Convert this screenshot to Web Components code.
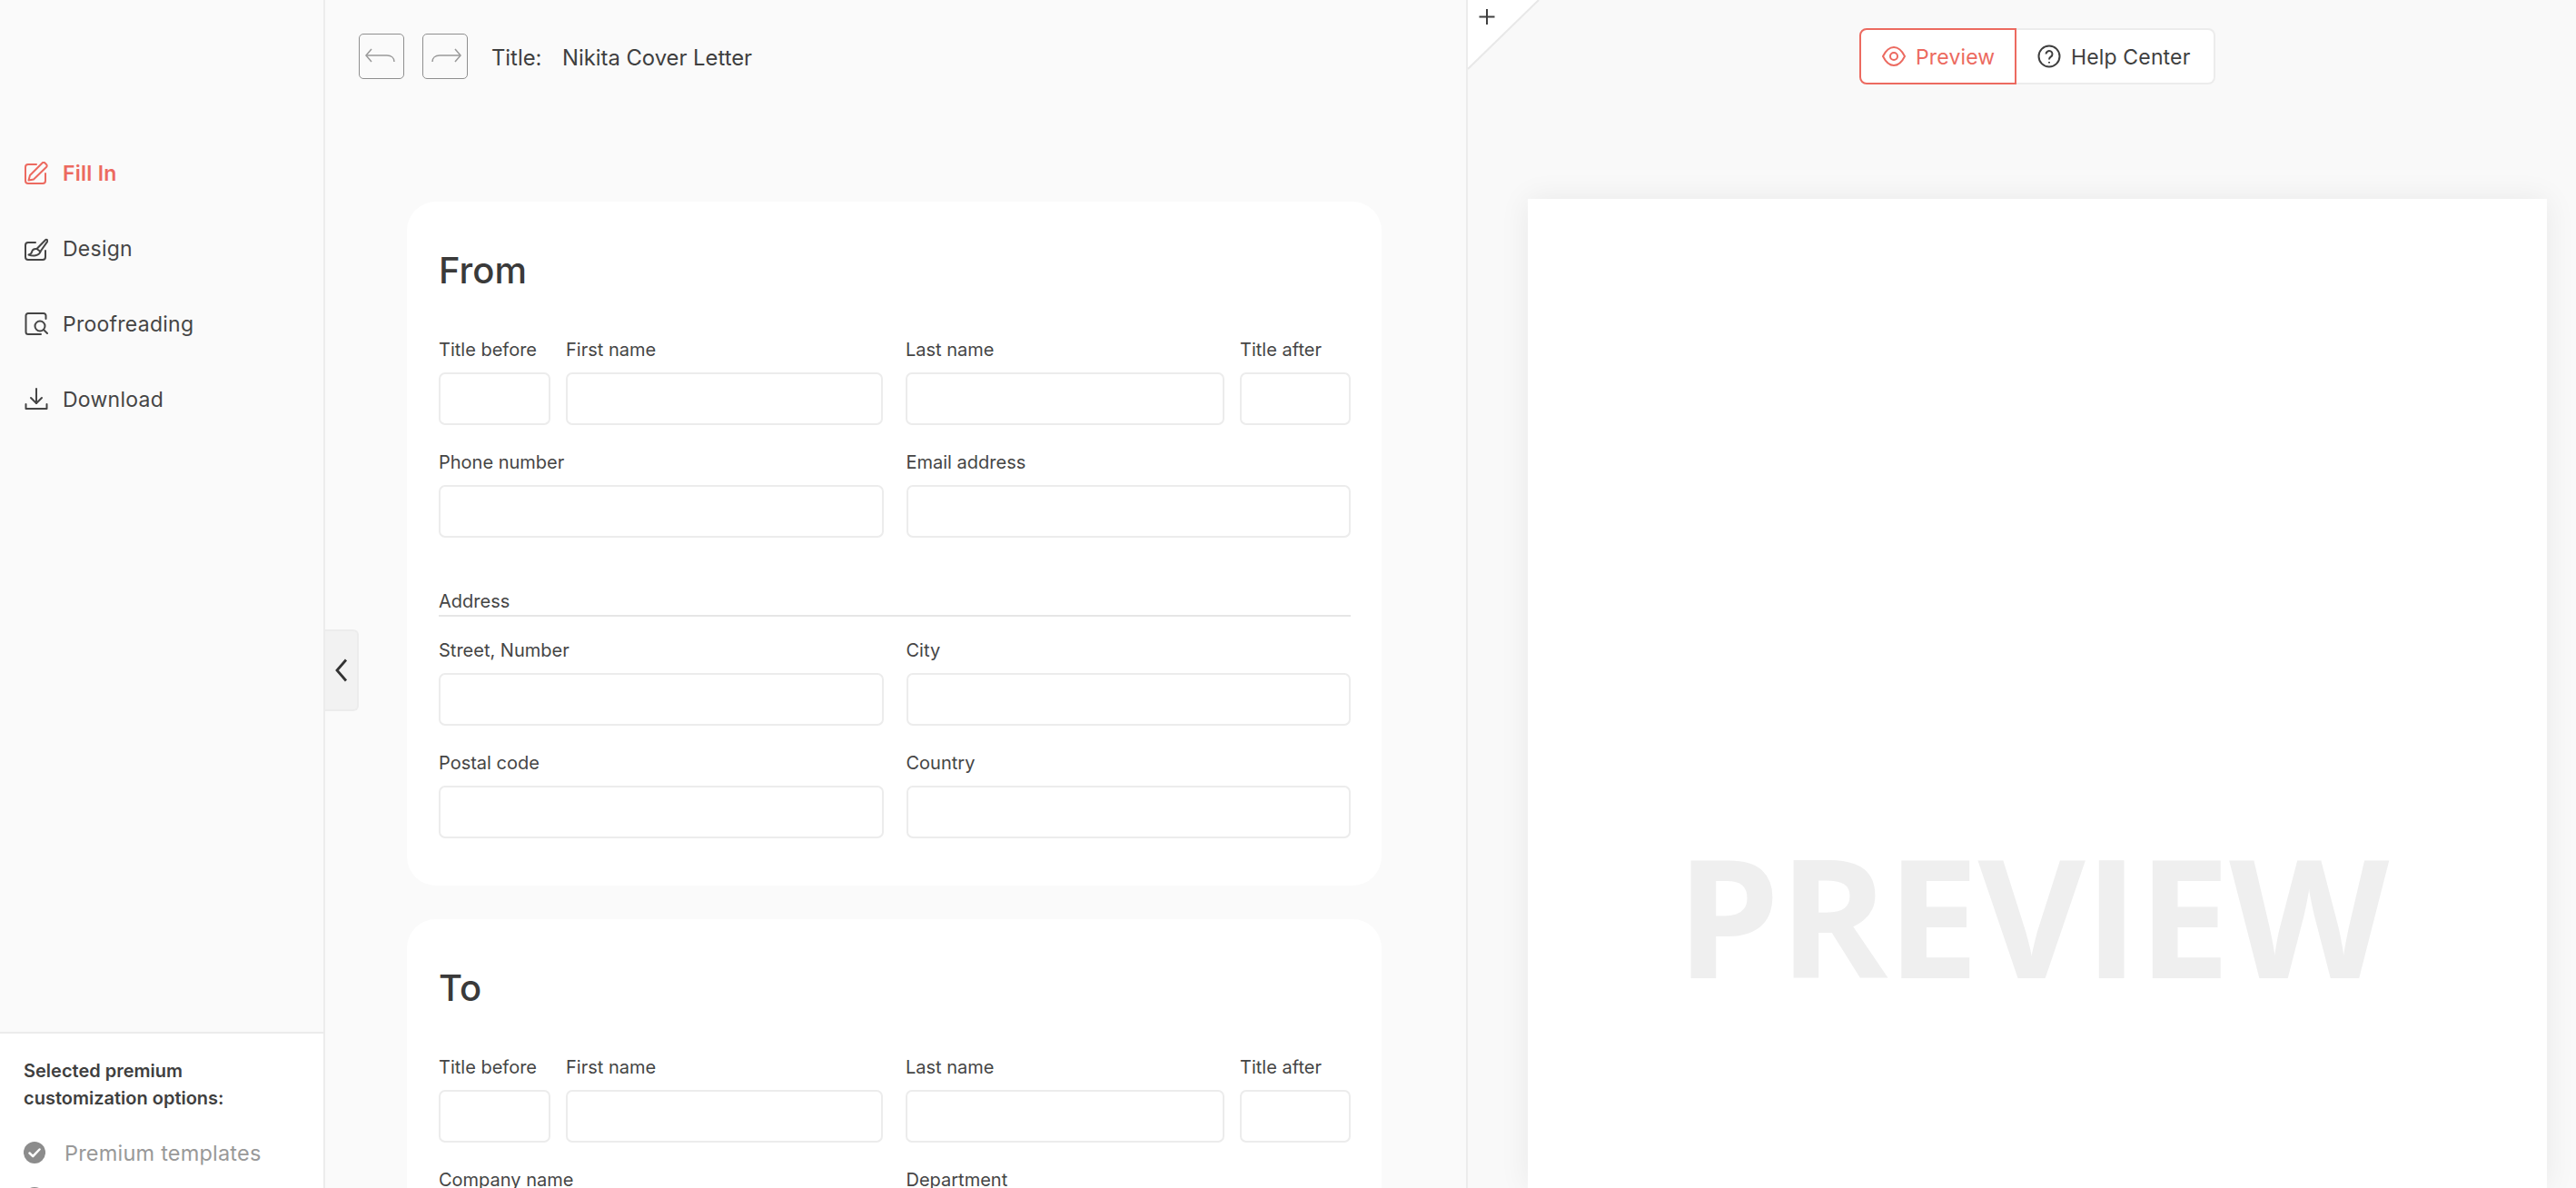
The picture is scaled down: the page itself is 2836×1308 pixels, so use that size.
<!DOCTYPE html>
<html lang="en">
<head>
<meta charset="utf-8">
<title>Cover Letter</title>
<style>
  html, body { margin: 0; height: 100%; overflow: hidden; }
  body { font-family: Inter, "Liberation Sans", sans-serif; color: #3f3f3f; background: #fafafa; }
  .app { display: grid; grid-template-columns: 358px 1258px 1fr; height: 1308px; overflow: hidden; }
</style>
</head>
<body>

<div class="app">
  <side-nav>
    <nav-item active label="Fill In" icon="fill"></nav-item>
    <nav-item label="Design" icon="design"></nav-item>
    <nav-item label="Proofreading" icon="proof"></nav-item>
    <nav-item label="Download" icon="download"></nav-item>
    <premium-box slot="bottom">
      <premium-option label="Premium templates"></premium-option>
      <premium-option label=""></premium-option>
    </premium-box>
  </side-nav>

  <editor-panel title-text="Nikita Cover Letter">
    <form-card heading="From">
      <field-row kind="name">
        <form-field label="Title before"></form-field>
        <form-field label="First name"></form-field>
        <form-field label="Last name"></form-field>
        <form-field label="Title after"></form-field>
      </field-row>
      <field-row>
        <form-field label="Phone number"></form-field>
        <form-field label="Email address"></form-field>
      </field-row>
      <section-rule label="Address"></section-rule>
      <field-row>
        <form-field label="Street, Number"></form-field>
        <form-field label="City"></form-field>
      </field-row>
      <field-row>
        <form-field label="Postal code"></form-field>
        <form-field label="Country"></form-field>
      </field-row>
    </form-card>
    <form-card heading="To">
      <field-row kind="name">
        <form-field label="Title before"></form-field>
        <form-field label="First name"></form-field>
        <form-field label="Last name"></form-field>
        <form-field label="Title after"></form-field>
      </field-row>
      <field-row>
        <form-field label="Company name"></form-field>
        <form-field label="Department"></form-field>
      </field-row>
    </form-card>
  </editor-panel>

  <preview-panel></preview-panel>
</div>

<script>
  const ICONS = {
    fill: '<path d="M13 3H4a3 3 0 0 0-3 3v15a3 3 0 0 0 3 3h16a3 3 0 0 0 3-3v-8"/><path d="M4.500 20.500L6 15 19.500 1.500a2 2 0 0 1 3 0l1.500 1.500a2 2 0 0 1 0 3L10 19.500z"/>',
    design: '<path d="M12 6H4a3 3 0 0 0-3 3v13a3 3 0 0 0 3 3h16a3 3 0 0 0 3-3v-7"/><path d="M13.500 13L23 3.200a1.400 1.400 0 0 1 2 2L17 16.500"/><path d="M13.500 13c-3-.3-5 1.200-5.500 3.500-.3 1.500-1.500 2.500-3.500 3 4.500 1.500 11.500 1.500 13-3.500z"/>',
    proof: '<path d="M23.500 7V3.500A2.500 2.500 0 0 0 21 1H4a2.500 2.500 0 0 0-2.500 2.500v18A2.500 2.500 0 0 0 4 24h14"/><circle cx="17" cy="15" r="5.500"/><path d="M21 19l4 4"/>',
    download: '<path d="M13 1v16"/><path d="M7 11l6 6 6-6"/><path d="M1.500 18v5h23v-5"/>'
  };

  class NavItem extends HTMLElement {
    constructor() {
      super();
      this.attachShadow({ mode: 'open' });
    }

    connectedCallback() {
      const icon = ICONS[this.getAttribute('icon')] || '';
      this.shadowRoot.innerHTML = `
        <style>
          :host {
            display: flex;
            align-items: center;
            gap: 16px;
            height: 83px;
            padding-left: 27px;
            font-size: 23px;
            letter-spacing: .25px;
            color: #454545;
          }
          :host([active]) { color: #ec6a60; font-weight: 600; }
          svg { width: 26px; height: 26px; flex: none; fill: none; stroke: currentColor; stroke-width: 2; stroke-linecap: round; stroke-linejoin: round; }
        </style>
        <svg viewBox="0 0 26 26">${icon}</svg>
        <span>${this.getAttribute('label')}</span>
      `;
    }
  }
  customElements.define('nav-item', NavItem);

  class SideNav extends HTMLElement {
    constructor() {
      super();
      this.attachShadow({ mode: 'open' });
      this.shadowRoot.innerHTML = `
        <style>
          :host {
            display: flex;
            flex-direction: column;
            height: 1308px;
            overflow: hidden;
            background: #fafafa;
            border-right: 2px solid #ececec;
            box-sizing: border-box;
          }
          .items { flex: 1; padding-top: 149px; }
        </style>
        <div class="items"><slot></slot></div>
        <slot name="bottom"></slot>
      `;
    }
  }
  customElements.define('side-nav', SideNav);

  class PremiumBox extends HTMLElement {
    constructor() {
      super();
      this.attachShadow({ mode: 'open' });
      this.shadowRoot.innerHTML = `
        <style>
          :host {
            display: block;
            flex: 0 0 172px;
            height: 172px;
            box-sizing: border-box;
            overflow: hidden;
            padding: 26px 0 0 26px;
            background: #fff;
            border-top: 2px solid #ececec;
          }
          p { margin: 0 0 20px; font-size: 20px; line-height: 30px; font-weight: 600; color: #3f3f3f; }
        </style>
        <p>Selected premium<br>customization options:</p>
        <slot></slot>
      `;
    }
  }
  customElements.define('premium-box', PremiumBox);

  class PremiumOption extends HTMLElement {
    constructor() {
      super();
      this.attachShadow({ mode: 'open' });
    }

    connectedCallback() {
      this.shadowRoot.innerHTML = `
        <style>
          :host { display: flex; align-items: center; gap: 21px; height: 50px; font-size: 23.500px; letter-spacing: .2px; color: #999; }
          svg { width: 24px; height: 24px; flex: none; }
        </style>
        <svg viewBox="0 0 24 24"><circle cx="12" cy="12" r="12" fill="#8c8c8c"/><path d="M6.500 12.500l3.700 3.600 7.300-7.600" fill="none" stroke="#fff" stroke-width="2.500" stroke-linecap="round" stroke-linejoin="round"/></svg>
        <span>${this.getAttribute('label')}</span>
      `;
    }
  }
  customElements.define('premium-option', PremiumOption);

  class EditorPanel extends HTMLElement {
    constructor() {
      super();
      this.attachShadow({ mode: 'open' });
    }

    connectedCallback() {
      this.shadowRoot.innerHTML = `
        <style>
          :host {
            display: block;
            position: relative;
            height: 1308px;
            background: #fafafa;
            border-right: 2px solid #ececec;
            box-sizing: border-box;
          }
          .clip { height: 100%; overflow: hidden; padding: 0 93px 0 90px; box-sizing: border-box; }
          .toolbar { display: flex; align-items: center; height: 222px; box-sizing: border-box; padding: 37px 0 135px 37px; margin-left: -90px; font-size: 23.800px; }
          .toolbar span { position: relative; top: 1px; }
          .toolbar button {
            width: 50px; height: 50px; padding: 0; margin-right: 20px;
            display: grid; place-items: center;
            background: transparent; border: 1.500px solid #8f8f8f; border-radius: 5px;
          }
          .toolbar button svg { width: 38px; height: 24px; fill: none; stroke: #999; stroke-width: 1.500; }
          .label { margin-left: 6px; width: 78px; }
          .stack { display: flex; flex-direction: column; gap: 37px; }
          .tab {
            position: absolute; left: 0; top: 693px;
            width: 37px; height: 90px; box-sizing: border-box;
            display: grid; place-items: center;
            background: #f2f2f2; border: 2px solid #ececec; border-left: 0; border-radius: 0 6px 6px 0;
          }
          .tab svg { width: 16px; height: 26px; fill: none; stroke: #333; stroke-width: 2.800; }
        </style>
        <div class="clip">
          <div class="toolbar">
            <button aria-label="Undo"><svg viewBox="0 0 38 24"><path d="M8 4l-6 7 6 7"/><path d="M2 11h23c5 0 8 3 8 7"/></svg></button>
            <button aria-label="Redo"><svg viewBox="0 0 38 24"><path d="M30 4l6 7-6 7"/><path d="M36 11H13c-5 0-8 3-8 7"/></svg></button>
            <span class="label">Title:</span>
            <span>${this.getAttribute('title-text')}</span>
          </div>
          <div class="stack"><slot></slot></div>
        </div>
        <div class="tab"><svg viewBox="0 0 16 26"><path d="M13 1.500L3 13l10 11.500"/></svg></div>
      `;
    }
  }
  customElements.define('editor-panel', EditorPanel);

  class FormCard extends HTMLElement {
    constructor() {
      super();
      this.attachShadow({ mode: 'open' });
    }

    connectedCallback() {
      this.shadowRoot.innerHTML = `
        <style>
          :host {
            display: flex;
            flex-direction: column;
            gap: 30px;
            padding: 52px 34px 52px 35px;
            background: #fff;
            border-radius: 32px;
          }
          h2 { margin: 0 0 22px; font-size: 40px; line-height: 48px; font-weight: 500; color: #3a3a3a; }
        </style>
        <h2>${this.getAttribute('heading')}</h2>
        <slot></slot>
      `;
    }
  }
  customElements.define('form-card', FormCard);

  class FieldRow extends HTMLElement {
    constructor() {
      super();
      this.attachShadow({ mode: 'open' });
      this.shadowRoot.innerHTML = `
        <style>
          :host { display: grid; grid-template-columns: 1fr 1fr; column-gap: 25px; }
          :host([kind="name"]) { grid-template-columns: 123px 349px 1fr 122px; column-gap: 17px; }
          :host([kind="name"]) ::slotted(:nth-child(3)) { margin-left: 8px; }
        </style>
        <slot></slot>
      `;
    }
  }
  customElements.define('field-row', FieldRow);

  class FormField extends HTMLElement {
    constructor() {
      super();
      this.attachShadow({ mode: 'open' });
    }

    connectedCallback() {
      this.shadowRoot.innerHTML = `
        <style>
          :host { display: block; min-width: 0; font-size: 20px; color: #454545; }
          label { display: block; line-height: 22px; margin-bottom: 14px; white-space: nowrap; }
          input {
            display: block; width: 100%; height: 58px; box-sizing: border-box;
            background: #fff; border: 2px solid #ececec; border-radius: 7px; outline: 0;
          }
        </style>
        <label>${this.getAttribute('label')}</label>
        <input type="text">
      `;
    }
  }
  customElements.define('form-field', FormField);

  class SectionRule extends HTMLElement {
    constructor() {
      super();
      this.attachShadow({ mode: 'open' });
    }

    connectedCallback() {
      this.shadowRoot.innerHTML = `
        <style>
          :host {
            display: block;
            margin: 28px 0 -4px;
            padding-bottom: 3px;
            font-size: 20px;
            line-height: 24px;
            color: #454545;
            border-bottom: 2px solid #e6e6e6;
          }
        </style>
        ${this.getAttribute('label')}
      `;
    }
  }
  customElements.define('section-rule', SectionRule);

  class PreviewPanel extends HTMLElement {
    constructor() {
      super();
      this.attachShadow({ mode: 'open' });
      this.shadowRoot.innerHTML = `
        <style>
          :host { display: block; position: relative; height: 1308px; overflow: hidden; background: #f9f9f9; }
          .corner { position: absolute; left: 0; top: 0; width: 80px; height: 78px; }
          .corner svg { display: block; }
          .bar { display: flex; justify-content: center; height: 219px; box-sizing: border-box; padding: 31px 32px 0 66px; }
          .btn {
            display: flex; align-items: center; gap: 11px; height: 62px; box-sizing: border-box;
            padding: 0 0 0 23px; font-size: 23px; letter-spacing: .15px; background: #fff; border: 2px solid #ececec;
          }
          .btn span { position: relative; top: 1px; }
          .btn svg { width: 26px; height: 26px; fill: none; stroke: currentColor; stroke-width: 2; }
          .on { width: 173px; color: #ec6a60; border-color: #ec6a60; border-radius: 8px 0 0 8px; }
          .help { width: 219px; border-left: 0; border-radius: 0 8px 8px 0; color: #3f3f3f; }
          .page {
            height: 1089px; margin: 0 32px 0 66px; padding-top: 697px; box-sizing: border-box;
            display: flex; justify-content: center;
            background: #fff; box-shadow: 0 0 32px rgba(0,0,0,.07);
            font: 700 182px/180px "Open Sans", sans-serif; letter-spacing: -1.300px; color: #efefef;
          }
          .page span { position: relative; left: -6px; }
        </style>
        <div class="corner"><svg width="80" height="78" viewBox="0 0 80 78"><path d="M0 0H78L0 76z" fill="#fff"/><path d="M78 0L0 76" stroke="#e8e8e8" stroke-width="2" fill="none"/><path d="M21 10v17M12.500 18.500h17" stroke="#3f3f3f" stroke-width="2" fill="none"/></svg></div>
        <div class="bar">
          <div class="btn on"><svg viewBox="0 0 26 26"><path d="M1 13C4 7 8.500 3 13 3s9 4 12 10c-3 6-7.500 10-12 10S4 19 1 13z"/><circle cx="13" cy="13" r="4"/></svg><span>Preview</span></div>
          <div class="btn help"><svg viewBox="0 0 26 26"><circle cx="13" cy="13" r="11.500"/><path d="M9.500 10.500a3.500 3.500 0 1 1 5.500 2.900c-1.300.9-2 1.600-2 3"/><path d="M13 19v1.500"/></svg><span>Help Center</span></div>
        </div>
        <div class="page"><span>PREVIEW</span></div>
      `;
    }
  }
  customElements.define('preview-panel', PreviewPanel);
</script>
</body>
</html>
